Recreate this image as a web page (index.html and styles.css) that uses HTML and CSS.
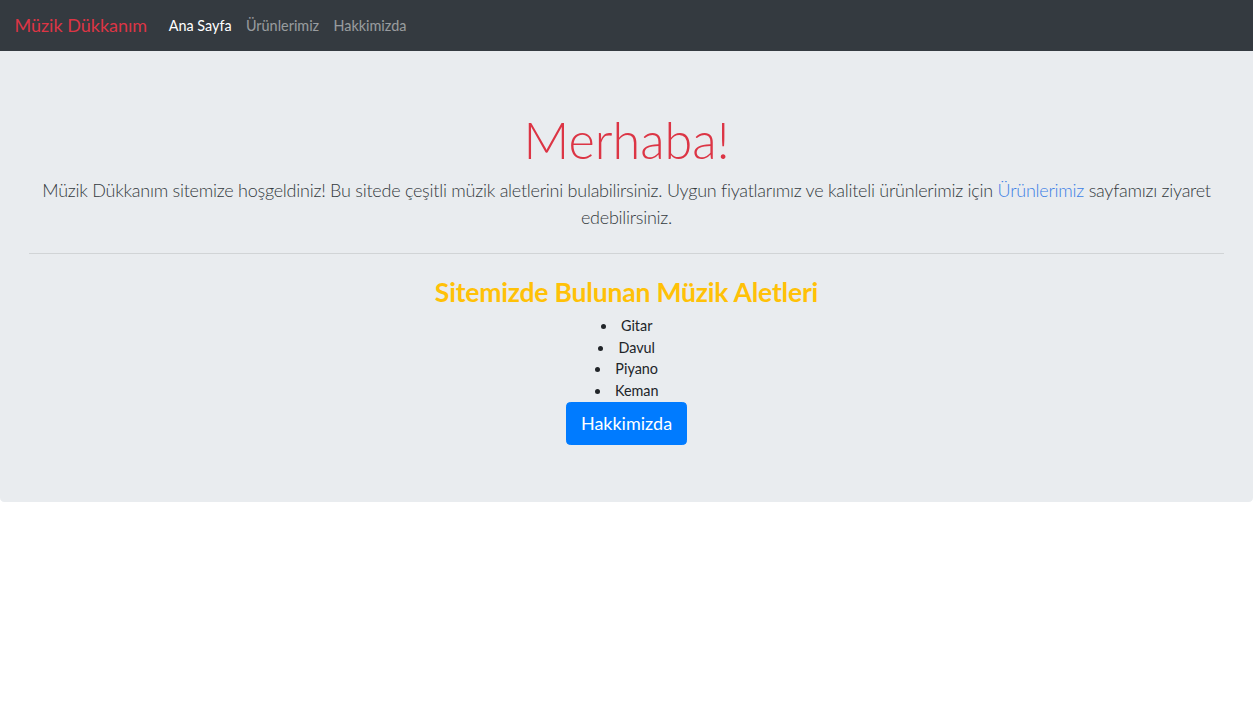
FILE: index.html
```html
<!DOCTYPE html>
<html lang="tr">
<head>
<meta charset="utf-8">
<title>Müzik Dükkanım</title>
<link rel="stylesheet" href="styles.css">
</head>
<body>
<nav class="navbar">
  <a class="brand" href="#">Müzik Dükkanım</a>
  <ul class="nav">
    <li><a class="nav-link active" href="#">Ana Sayfa</a></li>
    <li><a class="nav-link" href="#">Ürünlerimiz</a></li>
    <li><a class="nav-link" href="#">Hakkimizda</a></li>
  </ul>
</nav>
<main class="jumbotron">
  <h1 class="display">Merhaba!</h1>
  <p class="lead">Müzik Dükkanım sitemize hoşgeldiniz! Bu sitede çeşitli müzik aletlerini bulabilirsiniz. Uygun fiyatlarımız ve kaliteli ürünlerimiz için <a class="link" href="#">Ürünlerimiz</a> sayfamızı ziyaret edebilirsiniz.</p>
  <hr class="divider">
  <h2 class="section-title">Sitemizde Bulunan Müzik Aletleri</h2>
  <ul class="instruments">
    <li>Gitar</li>
    <li>Davul</li>
    <li>Piyano</li>
    <li>Keman</li>
  </ul>
  <a class="btn" href="#">Hakkimizda</a>
</main>
</body>
</html>
```

FILE: styles.css
```css
* { box-sizing: border-box; }
html, body { margin: 0; padding: 0; }
body {
  font-family: Lato, "Open Sans", "Liberation Sans", sans-serif;
  font-size: 14.4px;
  line-height: 1.5;
  color: #212529;
  background: #fff;
}
a { text-decoration: none; }

.navbar {
  display: flex;
  align-items: center;
  background: #343a40;
  padding: 7.2px 14.4px;
  height: 51px;
}
.brand {
  color: #dc3545;
  font-size: 18px;
  line-height: 27px;
  padding: 4.5px 0;
  margin-right: 14.4px;
}
.nav {
  display: flex;
  list-style: none;
  margin: 0;
  padding: 0;
}
.nav-link {
  display: block;
  padding: 7.2px 7.2px;
  color: rgba(255,255,255,.5);
}
.nav-link.active { color: #fff; }

.jumbotron {
  display: block;
  background: #e9ecef;
  padding: 58.6px 28.8px 56.6px;
  border-radius: 0 0 4.3px 4.3px;
  text-align: center;
}
.display {
  margin: 0 0 7.2px;
  font-size: 50.4px;
  font-weight: 300;
  line-height: 1.2;
  color: #dc3545;
}
.lead {
  margin: 0;
  font-size: 18px;
  font-weight: 300;
  letter-spacing: -0.25px;
  color: #343a40;
}
.link { color: #3d7fe6; }
.divider {
  margin: 21.6px 0;
  border: 0;
  border-top: 1px solid rgba(0,0,0,.1);
}
.section-title {
  margin: 0 0 5.2px;
  font-size: 26.5px;
  font-weight: 700;
  line-height: 34.56px;
  letter-spacing: -0.2px;
  color: #ffc107;
}
.instruments {
  margin: 0;
  padding-left: 0;
  list-style-position: inside;
}
.btn {
  display: inline-block;
  background: #007bff;
  border: 1px solid #007bff;
  color: #fff;
  font-size: 18px;
  line-height: 1.5;
  padding: 7.2px 14.4px;
  border-radius: 4.3px;
}
```
